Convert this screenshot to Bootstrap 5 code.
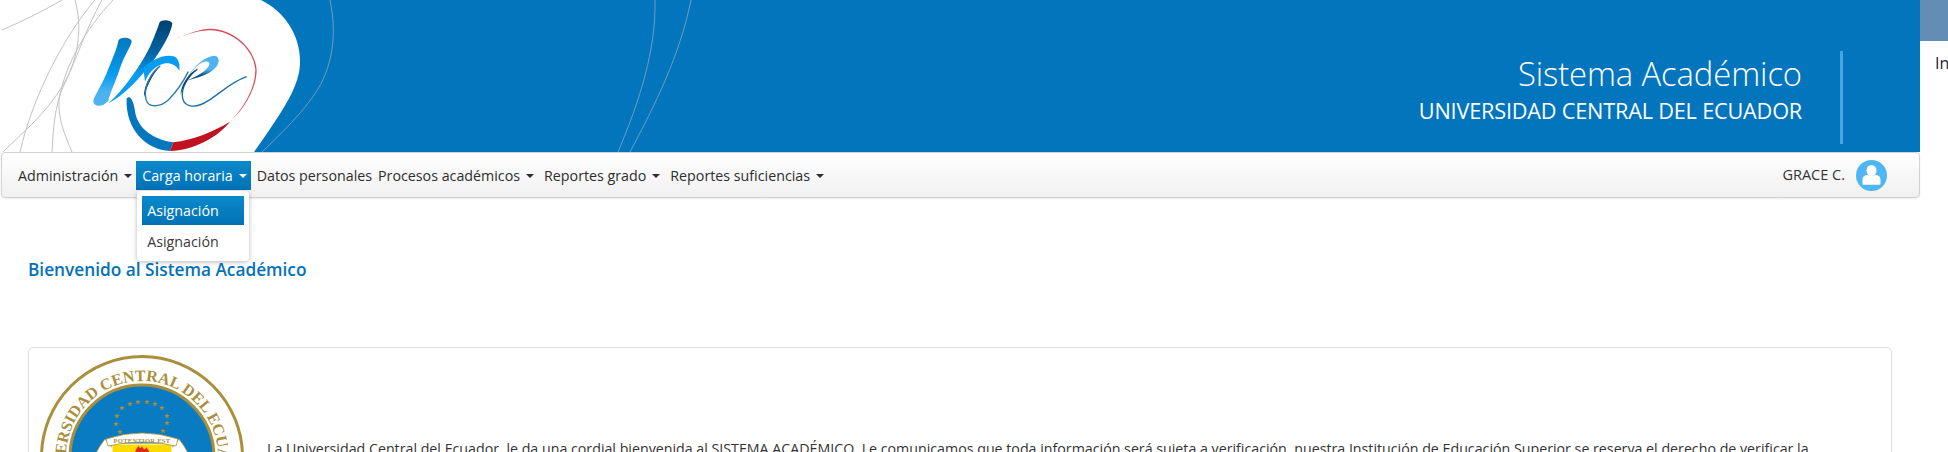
<!DOCTYPE html>
<html lang="es">
<head>
<meta charset="utf-8">
<title>Sistema Académico</title>
<link rel="stylesheet" href="https://cdn.jsdelivr.net/npm/bootstrap@5.3.0/dist/css/bootstrap.min.css">
<style>
html,body{height:452px;overflow:hidden;background:#fff}
body{font-family:"Open Sans","Noto Sans",sans-serif;color:#212529}
.app-shell{width:1948px;height:452px}
.app-main{width:1920px;flex:none}
.app-side{width:28px;flex:none;overflow:hidden}
.side-band{height:41px;background:#648db5}
.side-text{padding:10px 0 0 15px;font-size:16px;white-space:nowrap;color:#212529}
.top-band{height:152px;background:#0275bd;position:relative;overflow:hidden;padding:51px 77px 8px 0}
.top-art{position:absolute;left:0;top:0;width:720px;height:152px}
.title-block{padding-right:38px;text-align:right;color:#fff;height:93px}
.title-rule{width:3px;height:93px;background:#4aa3df}
.title-main{font-size:32.8px;line-height:38px;margin-top:4px;font-weight:300;letter-spacing:-.1px}
.title-sub{font-size:21.7px;line-height:26px;margin-top:5px;font-weight:400;letter-spacing:-.2px}
.menu-bar{margin-left:1px;height:46px;padding:0 32px 0 10px;background:linear-gradient(#fff,#f0f0f0);border:1px solid #d2d2d2;border-radius:4px;box-shadow:0 1px 2px rgba(0,0,0,.08)}
.menu-bar .navbar-nav .nav-link{font-size:14.25px;line-height:19px;padding:5px 0 5px 6px;color:#2d2d2d;white-space:nowrap}
.menu-bar .navbar-nav .nav-link.dropdown-toggle{padding-right:4px}
.menu-bar .nav-link.dropdown-toggle::after{margin-left:6px;vertical-align:.2em}
.menu-bar .navbar-nav .nav-link.open-item{background:linear-gradient(#0a8acb,#0272b6);color:#fff}
.menu-pop{display:block;min-width:112px;width:112px;margin:1px 0 0 1px!important;left:0;top:100%;padding:5px;border:0;border-radius:4px;box-shadow:0 1px 5px rgba(0,0,0,.28);font-size:14.25px}
.menu-pop .dropdown-item{padding:5px;line-height:19px;color:#3a3a3a}
.menu-pop .dropdown-item.active{background:linear-gradient(#0a8acb,#0272b6);color:#fff}
.menu-pop li+li{margin-top:2px}
.user-name{font-size:14.5px;color:#333;margin-right:11px}
.welcome{margin:0;padding:62px 0 0 28px;color:#0272b8;font-size:17.25px;line-height:20px;font-weight:600}
.seal-card{margin:67px 28px 0 28px;height:300px;border:1px solid #dedede;border-radius:5px;padding:6px 0 0 10px}
.seal{width:206px;height:206px;flex:none}
.seal-text{margin:85px 0 0 22px;font-size:14.22px;line-height:20px;white-space:nowrap;color:#333}
.gold{fill:#a98f3c}
</style>
</head>
<body>
<div class="app-shell d-flex">
  <div class="app-main">
    <header class="top-band d-flex justify-content-end">
      <svg class="top-art" viewBox="0 0 720 152" aria-hidden="true">
        <path d="M0 0H261C285 12 300 35 300 62C300 85 285 108 254 152H0Z" fill="#fff"/>
        <g fill="none" stroke="#6f9dc0" stroke-width="1">
          <path d="M330 0C335 25 335 50 325 75C315 100 290 125 262 152"/>
          <path d="M655 0C656 50 640 100 618 152"/>
          <path d="M691 0C680 55 655 105 630 152"/>
        </g>
        <g fill="none" stroke="#c2c2c2" stroke-width="1">
          <path d="M2 30C25 20 45 10 62 0"/>
          <path d="M75 0C82 25 80 55 63 87C55 105 53 130 52 152"/>
          <path d="M95 0C65 35 33 95 20 152"/>
          <path d="M102 0C85 30 75 65 63 85C45 115 25 130 2 153"/>
          <path d="M113 0C85 30 65 65 59 100C58 120 65 135 72 152"/>
        </g>
        <defs>
          <linearGradient id="gu" x1="0" y1="0" x2="0" y2="1"><stop offset="0" stop-color="#0277bd"/><stop offset=".55" stop-color="#0a9cf0"/><stop offset=".8" stop-color="#4cb3f0"/></linearGradient>
          <linearGradient id="gr" x1="0" y1="0" x2="0" y2="1"><stop offset="0" stop-color="#003f6e"/><stop offset=".4" stop-color="#0267a8"/><stop offset=".65" stop-color="#0a9cf0"/></linearGradient>
          <linearGradient id="ge" x1="0" y1="0" x2="0" y2="1"><stop offset="0" stop-color="#4cb3f0"/><stop offset=".55" stop-color="#4cb3f0"/><stop offset=".8" stop-color="#0a4f80"/></linearGradient>
        </defs>
        <g transform="translate(60 10) scale(.3333)">
          <path d="M205 262C215 260 222 280 226 310C235 355 280 390 340 397L330 423C260 420 195 360 200 265Z" fill="#0277bd"/>
          <path d="M340 397C400 390 460 365 510 335C470 385 400 420 330 423Z" fill="#c1121f"/>
          <path d="M510 335C560 290 590 230 590 180C585 110 510 50 440 57C410 60 375 75 345 88C380 72 415 62 450 61C520 62 583 120 586 180C586 235 550 295 510 335Z" fill="#d94a58"/>
          <path d="M175 92C178 82 208 78 215 92C216 105 195 130 180 175C165 220 150 250 145 272C125 295 100 290 100 272C105 255 125 225 140 190C155 150 170 120 175 92Z" fill="url(#gu)"/>
          <path d="M145 280C190 240 240 170 270 110C285 75 295 50 298 38C305 28 330 28 337 40C335 65 310 110 285 145C250 195 190 260 145 280Z" fill="url(#gr)"/>
          <path d="M250 175C275 145 320 130 345 140C358 150 360 165 358 182C345 160 320 155 300 165C280 175 265 190 255 215Z" fill="#0a9cf0"/>
          <path d="M305 165C275 185 250 225 252 262C258 240 272 195 305 165Z" fill="#0a3f6a"/>
          <path d="M300 168C270 190 250 235 258 268C265 295 300 292 325 270C350 245 370 215 385 185" fill="none" stroke="#2a7ab0" stroke-width="4"/>
          <path d="M412 178C385 195 362 235 368 265C375 295 410 295 445 272C480 250 515 215 560 200" fill="none" stroke="#1a6ea8" stroke-width="4"/>
          <path d="M415 175C385 190 362 225 362 255C370 225 390 195 415 175Z" fill="#0a3f6a"/>
          <path d="M378 212C395 175 430 140 465 137C480 140 480 160 465 175C445 195 410 205 378 212C410 200 435 185 445 170C455 155 440 150 425 158C405 170 390 190 378 212Z" fill="url(#ge)"/>
        </g>
      </svg>
      <div class="title-block">
        <div class="title-main">Sistema Académico</div>
        <div class="title-sub">UNIVERSIDAD CENTRAL DEL ECUADOR</div>
      </div>
      <div class="title-rule"></div>
    </header>
    <nav class="navbar navbar-expand menu-bar">
      <ul class="navbar-nav align-items-center">
        <li class="nav-item"><a class="nav-link dropdown-toggle" href="#">Administración</a></li>
        <li class="nav-item dropdown">
          <a class="nav-link dropdown-toggle open-item" href="#">Carga horaria</a>
          <ul class="dropdown-menu menu-pop">
            <li><a class="dropdown-item active" href="#">Asignación</a></li>
            <li><a class="dropdown-item" href="#">Asignación</a></li>
          </ul>
        </li>
        <li class="nav-item"><a class="nav-link" href="#">Datos personales</a></li>
        <li class="nav-item"><a class="nav-link dropdown-toggle" href="#">Procesos académicos</a></li>
        <li class="nav-item"><a class="nav-link dropdown-toggle" href="#">Reportes grado</a></li>
        <li class="nav-item"><a class="nav-link dropdown-toggle" href="#">Reportes suficiencias</a></li>
      </ul>
      <div class="d-flex align-items-center ms-auto">
        <span class="user-name">GRACE C.</span>
        <svg width="31" height="31" viewBox="0 0 31 31" aria-hidden="true">
          <circle cx="15.5" cy="15.5" r="15.5" fill="#4db6f3"/>
          <ellipse cx="15.5" cy="10.5" rx="5" ry="5.5" fill="#fff"/>
          <path d="M6.500 23.500V20C6.500 16.500 9 15 11.500 14.800C13.500 16.200 17.500 16.200 19.500 14.800C22 15 24.500 16.500 24.500 20V23.500C24.500 24.300 24 24.800 23 24.800H8C7 24.800 6.500 24.300 6.500 23.500Z" fill="#fff"/>
        </svg>
      </div>
    </nav>
    <h1 class="welcome">Bienvenido al Sistema Académico</h1>
    <div class="seal-card d-flex">
      <svg class="seal" viewBox="0 0 206 206" aria-label="Sello de la Universidad Central del Ecuador">
        <defs>
          <path id="arc" d="M103 179A76 76 0 1 1 103.010 179"/>
          <polygon id="st" points="0,-2.8 .8,-.9 2.7,-.9 1.2,.4 1.7,2.3 0,1.2 -1.7,2.3 -1.2,.4 -2.7,-.9 -.8,-.9"/>
        </defs>
        <circle cx="103" cy="103" r="100.500" fill="#fff" stroke="#a98f3c" stroke-width="3"/>
        <circle cx="103" cy="103" r="72" fill="#087bc3" stroke="#a98f3c" stroke-width="3"/>
        <text font-family="'Liberation Serif',serif" font-weight="700" font-size="16" fill="#a98f3c"><textPath href="#arc" startOffset="50%" text-anchor="middle">UNIVERSIDAD CENTRAL DEL ECUADOR</textPath></text>
        <g class="gold">
          <use href="#st" x="91" y="50"/><use href="#st" x="99" y="48"/><use href="#st" x="108" y="48"/><use href="#st" x="116" y="50"/>
          <use href="#st" x="83" y="54"/><use href="#st" x="123" y="54"/><use href="#st" x="78" y="62"/><use href="#st" x="128" y="62"/>
          <use href="#st" x="77" y="70"/><use href="#st" x="128" y="69"/><use href="#st" x="81" y="78"/><use href="#st" x="124" y="77"/>
          <use href="#st" x="89" y="82"/><use href="#st" x="98" y="84"/><use href="#st" x="107" y="84"/><use href="#st" x="116" y="82"/>
        </g>
        <path d="M66 85Q54 100 48 122L59 128Q63 108 75 96Z" fill="#fff" stroke="#a98f3c" stroke-width=".8"/>
        <path d="M140 85Q152 100 158 122L147 128Q143 108 131 96Z" fill="#fff" stroke="#a98f3c" stroke-width=".8"/>
        <rect x="73" y="90" width="60" height="70" fill="#fedb00" stroke="#fff" stroke-width="1"/>
        <path d="M67 85Q103 73 139 85L137 92Q103 84 69 92Z" fill="#fff" stroke="#a98f3c" stroke-width=".8"/>
        <text x="103" y="88.500" font-family="'Liberation Serif',serif" font-size="6.500" font-weight="700" fill="#a98f3c" text-anchor="middle" letter-spacing=".3">POTENTIOR EST</text>
        <path d="M103 92c2 5 4 3 4 1 4 4 4 8 3 10 2-1 3-3 3-5 3 5 2 11-1 16h-18c-4-5-4-11-1-16 0 2 1 4 3 5-1-4 1-9 4-11 0 2 2 3 3 0z" fill="#e0281c"/>
      </svg>
      <p class="seal-text">La Universidad Central del Ecuador, le da una cordial bienvenida al SISTEMA ACADÉMICO. Le comunicamos que toda información será sujeta a verificación, nuestra Institución de Educación Superior se reserva el derecho de verificar la</p>
    </div>
  </div>
  <aside class="app-side">
    <div class="side-band"></div>
    <div class="side-text">In</div>
  </aside>
</div>
<script src="https://cdn.jsdelivr.net/npm/bootstrap@5.3.0/dist/js/bootstrap.bundle.min.js"></script>
</body>
</html>
